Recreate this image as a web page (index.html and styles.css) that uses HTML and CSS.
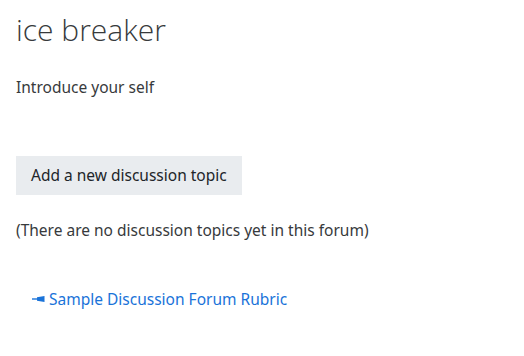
FILE: index.html
```html
<!DOCTYPE html>
<html>
<head>
<meta charset="utf-8">
<link rel="stylesheet" href="styles.css">
</head>
<body>
<div class="page">
  <h2 class="title">ice breaker</h2>
  <p class="intro">Introduce your self</p>
  <div class="actions"><button class="btn">Add a new discussion topic</button></div>
  <p class="empty">(There are no discussion topics yet in this forum)</p>
  <div class="links">
    <a class="rubric" href="#"><svg class="pin" width="13" height="6" viewBox="0 0 13 6"><path d="M0 3h6" stroke="#1a73d9" stroke-width="1.4"/><path d="M5 1.2 L12.5 0 V6 L5 4.8 Z" fill="#1a73d9"/></svg>Sample Discussion Forum Rubric</a>
  </div>
</div>
</body>
</html>
```
FILE: styles.css
```css
html, body { margin: 0; padding: 0; background: #fff; }
body {
  font-family: "Noto Sans", "Open Sans", sans-serif;
  color: #373a3c;
  font-size: 15.5px;
}
.page { padding: 12px 16px 0 16px; }
.title {
  font-family: "Open Sans", "Noto Sans", sans-serif;
  font-weight: 300;
  font-size: 30px;
  line-height: 36px;
  margin: 0;
  color: #373a3c;
}
.intro { margin: 28px 0 0 0; line-height: 22px; }
.actions { margin-top: 55px; }
.btn {
  font-family: inherit;
  font-size: 15.5px;
  color: #212529;
  background: #e9ecef;
  border: 0;
  padding: 0 15px;
  height: 39px;
  line-height: 39px;
  cursor: pointer;
  margin-top: 3px;
}
.empty { margin: 24px 0 0 0; line-height: 22px; }
.links { margin-top: 44px; padding-left: 16px; }
.rubric { color: #1a73d9; text-decoration: none; display: inline-flex; align-items: center; line-height: 22px; }
.pin { margin-right: 4px; }
```
